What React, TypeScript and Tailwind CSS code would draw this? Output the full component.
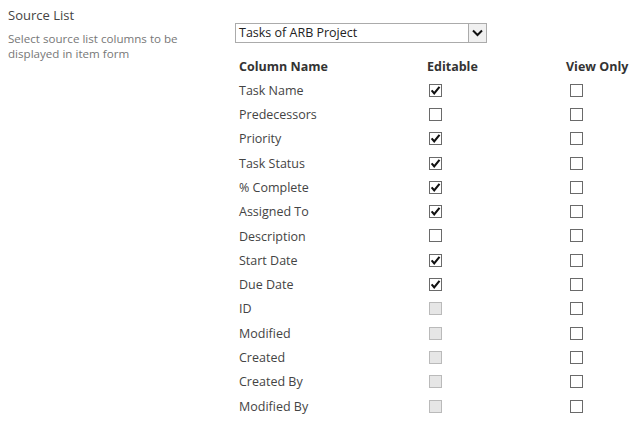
import React from "react";

type Row = { name: string; edit: "on" | "off" | "dis" };

const rows: Row[] = [
  { name: "Task Name", edit: "on" },
  { name: "Predecessors", edit: "off" },
  { name: "Priority", edit: "on" },
  { name: "Task Status", edit: "on" },
  { name: "% Complete", edit: "on" },
  { name: "Assigned To", edit: "on" },
  { name: "Description", edit: "off" },
  { name: "Start Date", edit: "on" },
  { name: "Due Date", edit: "on" },
  { name: "ID", edit: "dis" },
  { name: "Modified", edit: "dis" },
  { name: "Created", edit: "dis" },
  { name: "Created By", edit: "dis" },
  { name: "Modified By", edit: "dis" },
];

function Box({ state }: { state: "on" | "off" | "dis" }) {
  if (state === "dis") {
    return <div className="w-[13px] h-[13px] border border-[#bababa] bg-[#e6e6e6]" />;
  }
  return (
    <div className="w-[13px] h-[13px] border border-[#6a6a6a] bg-white relative">
      {state === "on" && (
        <svg className="absolute left-[0px] top-[0px]" width="11" height="11" viewBox="0 0 11 11">
          <path d="M1.6 5.4 L4.2 8.3 L9.5 1.8" fill="none" stroke="#111" strokeWidth="2.1" />
        </svg>
      )}
    </div>
  );
}

export default function App() {
  return (
    <div
      className="flex w-[634px] h-[424px] bg-white text-[#444]"
      style={{ fontFamily: '"Open Sans", "Noto Sans", sans-serif' }}
    >
      <div className="w-[235px] pl-2 pt-[5px] shrink-0">
        <div className="text-[13px] leading-[20px] text-[#444]">Source List</div>
        <div className="text-[11.6px] leading-[15px] text-[#777] mt-[6px] w-[190px]">
          Select source list columns to be displayed in item form
        </div>
      </div>
      <div className="flex-1">
        <div className="mt-[23px] w-[252px] h-[20px] border border-[#ababab] flex items-center">
          <div className="flex-1 text-[12.5px] leading-[18px] pl-[3px] text-[#222]">Tasks of ARB Project</div>
          <div className="w-[18px] h-[18px] border-l border-[#ababab] bg-[#f0f0f0] flex items-center justify-center">
            <svg width="11" height="8" viewBox="0 0 11 8">
              <path d="M1 1.5 L5.5 6 L10 1.5" fill="none" stroke="#111" strokeWidth="2" />
            </svg>
          </div>
        </div>
        <div className="ml-[4px] mt-[14px]">
          <div className="grid grid-cols-[188px_139px_1fr] h-[21px] items-center text-[12.5px] font-bold text-[#333]">
            <div>Column Name</div>
            <div>Editable</div>
            <div>View Only</div>
          </div>
          {rows.map((r) => (
            <div
              key={r.name}
              className="grid grid-cols-[188px_139px_1fr] h-[24.3px] items-center text-[12.5px] text-[#444]"
            >
              <div className="pt-[2px]">{r.name}</div>
              <div className="pl-[2px]">
                <Box state={r.edit} />
              </div>
              <div className="pl-[4px]">
                <Box state="off" />
              </div>
            </div>
          ))}
        </div>
      </div>
    </div>
  );
}
